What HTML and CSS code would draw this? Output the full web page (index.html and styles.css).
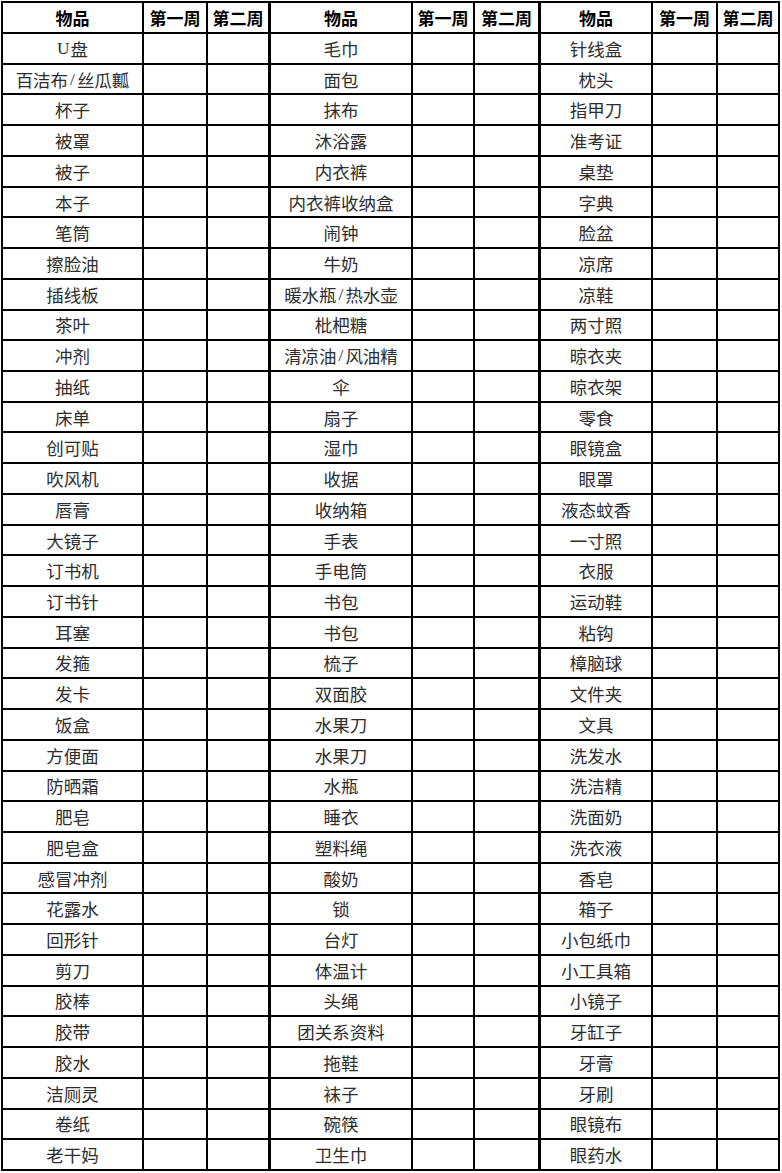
FILE: index.html
```html
<!DOCTYPE html>
<html lang="zh-CN">
<head>
<meta charset="utf-8">
<title>物品清单</title>
<link rel="stylesheet" href="styles.css">
</head>
<body>
<div class="sheet">
<div class="h">物品</div><div class="h">第一周</div><div class="h">第二周</div><div class="h g">物品</div><div class="h">第一周</div><div class="h">第二周</div><div class="h g">物品</div><div class="h">第一周</div><div class="h">第二周</div>
<div class="c"><span class="lat">U</span>盘</div><div></div><div></div><div class="c g">毛巾</div><div></div><div></div><div class="c g">针线盒</div><div></div><div></div>
<div class="c">百洁布<span class="sl">/</span>丝瓜瓤</div><div></div><div></div><div class="c g">面包</div><div></div><div></div><div class="c g">枕头</div><div></div><div></div>
<div class="c">杯子</div><div></div><div></div><div class="c g">抹布</div><div></div><div></div><div class="c g">指甲刀</div><div></div><div></div>
<div class="c">被罩</div><div></div><div></div><div class="c g">沐浴露</div><div></div><div></div><div class="c g">准考证</div><div></div><div></div>
<div class="c">被子</div><div></div><div></div><div class="c g">内衣裤</div><div></div><div></div><div class="c g">桌垫</div><div></div><div></div>
<div class="c">本子</div><div></div><div></div><div class="c g">内衣裤收纳盒</div><div></div><div></div><div class="c g">字典</div><div></div><div></div>
<div class="c">笔筒</div><div></div><div></div><div class="c g">闹钟</div><div></div><div></div><div class="c g">脸盆</div><div></div><div></div>
<div class="c">擦脸油</div><div></div><div></div><div class="c g">牛奶</div><div></div><div></div><div class="c g">凉席</div><div></div><div></div>
<div class="c">插线板</div><div></div><div></div><div class="c g">暖水瓶<span class="sl">/</span>热水壶</div><div></div><div></div><div class="c g">凉鞋</div><div></div><div></div>
<div class="c">茶叶</div><div></div><div></div><div class="c g">枇杷糖</div><div></div><div></div><div class="c g">两寸照</div><div></div><div></div>
<div class="c">冲剂</div><div></div><div></div><div class="c g">清凉油<span class="sl">/</span>风油精</div><div></div><div></div><div class="c g">晾衣夹</div><div></div><div></div>
<div class="c">抽纸</div><div></div><div></div><div class="c g">伞</div><div></div><div></div><div class="c g">晾衣架</div><div></div><div></div>
<div class="c">床单</div><div></div><div></div><div class="c g">扇子</div><div></div><div></div><div class="c g">零食</div><div></div><div></div>
<div class="c">创可贴</div><div></div><div></div><div class="c g">湿巾</div><div></div><div></div><div class="c g">眼镜盒</div><div></div><div></div>
<div class="c">吹风机</div><div></div><div></div><div class="c g">收据</div><div></div><div></div><div class="c g">眼罩</div><div></div><div></div>
<div class="c">唇膏</div><div></div><div></div><div class="c g">收纳箱</div><div></div><div></div><div class="c g">液态蚊香</div><div></div><div></div>
<div class="c">大镜子</div><div></div><div></div><div class="c g">手表</div><div></div><div></div><div class="c g">一寸照</div><div></div><div></div>
<div class="c">订书机</div><div></div><div></div><div class="c g">手电筒</div><div></div><div></div><div class="c g">衣服</div><div></div><div></div>
<div class="c">订书针</div><div></div><div></div><div class="c g">书包</div><div></div><div></div><div class="c g">运动鞋</div><div></div><div></div>
<div class="c">耳塞</div><div></div><div></div><div class="c g">书包</div><div></div><div></div><div class="c g">粘钩</div><div></div><div></div>
<div class="c">发箍</div><div></div><div></div><div class="c g">梳子</div><div></div><div></div><div class="c g">樟脑球</div><div></div><div></div>
<div class="c">发卡</div><div></div><div></div><div class="c g">双面胶</div><div></div><div></div><div class="c g">文件夹</div><div></div><div></div>
<div class="c">饭盒</div><div></div><div></div><div class="c g">水果刀</div><div></div><div></div><div class="c g">文具</div><div></div><div></div>
<div class="c">方便面</div><div></div><div></div><div class="c g">水果刀</div><div></div><div></div><div class="c g">洗发水</div><div></div><div></div>
<div class="c">防晒霜</div><div></div><div></div><div class="c g">水瓶</div><div></div><div></div><div class="c g">洗洁精</div><div></div><div></div>
<div class="c">肥皂</div><div></div><div></div><div class="c g">睡衣</div><div></div><div></div><div class="c g">洗面奶</div><div></div><div></div>
<div class="c">肥皂盒</div><div></div><div></div><div class="c g">塑料绳</div><div></div><div></div><div class="c g">洗衣液</div><div></div><div></div>
<div class="c">感冒冲剂</div><div></div><div></div><div class="c g">酸奶</div><div></div><div></div><div class="c g">香皂</div><div></div><div></div>
<div class="c">花露水</div><div></div><div></div><div class="c g">锁</div><div></div><div></div><div class="c g">箱子</div><div></div><div></div>
<div class="c">回形针</div><div></div><div></div><div class="c g">台灯</div><div></div><div></div><div class="c g">小包纸巾</div><div></div><div></div>
<div class="c">剪刀</div><div></div><div></div><div class="c g">体温计</div><div></div><div></div><div class="c g">小工具箱</div><div></div><div></div>
<div class="c">胶棒</div><div></div><div></div><div class="c g">头绳</div><div></div><div></div><div class="c g">小镜子</div><div></div><div></div>
<div class="c">胶带</div><div></div><div></div><div class="c g">团关系资料</div><div></div><div></div><div class="c g">牙缸子</div><div></div><div></div>
<div class="c">胶水</div><div></div><div></div><div class="c g">拖鞋</div><div></div><div></div><div class="c g">牙膏</div><div></div><div></div>
<div class="c">洁厕灵</div><div></div><div></div><div class="c g">袜子</div><div></div><div></div><div class="c g">牙刷</div><div></div><div></div>
<div class="c">卷纸</div><div></div><div></div><div class="c g">碗筷</div><div></div><div></div><div class="c g">眼镜布</div><div></div><div></div>
<div class="c">老干妈</div><div></div><div></div><div class="c g">卫生巾</div><div></div><div></div><div class="c g">眼药水</div><div></div><div></div>
</div>
</body>
</html>
```

FILE: styles.css
```css
html, body {
  margin: 0;
  padding: 0;
  background: #fff;
}

.sheet {
  box-sizing: border-box;
  margin: 1px 0 0 1px;
  width: 779px;
  height: 1170px;
  padding: 2px;
  background: #000;
  display: grid;
  grid-template-columns: 139px 62px 60px 141px 60px 63px 111px 63px 60px;
  grid-template-rows: 29px repeat(37, 1fr);
  gap: 2px;
  font-family: "Noto Sans CJK SC", sans-serif;
  font-size: 17.5px;
  color: #2e2e2e;
}

.sheet > div {
  background: #fff;
  display: flex;
  align-items: center;
  justify-content: center;
  white-space: nowrap;
  overflow: hidden;
}

.sheet > .g {
  margin-left: 1px;
}

.h {
  font-weight: 700;
  font-size: 17px;
  color: #000;
}

.c {
  font-weight: 400;
}

.lat {
  font-family: "Liberation Serif", serif;
  margin-right: 1px;
}

.sl {
  font-family: "Liberation Serif", serif;
  display: inline-block;
  width: 0.5em;
  text-align: center;
}
```
